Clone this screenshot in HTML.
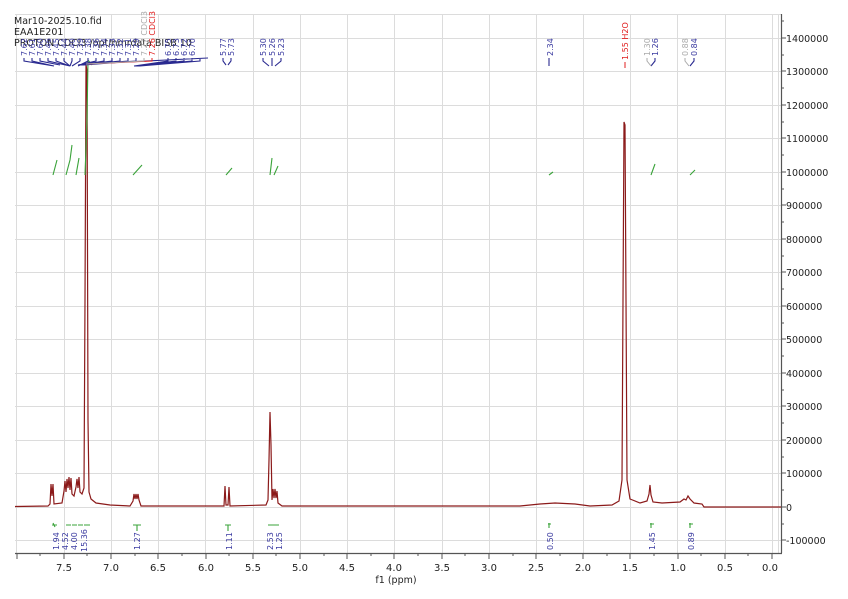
<!DOCTYPE html>
<html><head><meta charset="utf-8"><style>
body{margin:0;background:#fff;width:848px;height:599px;overflow:hidden}
svg{display:block;font-family:"DejaVu Sans","Liberation Sans",sans-serif}
</style></head><body>
<svg width="848" height="599" viewBox="0 0 848 599" xmlns="http://www.w3.org/2000/svg">
<g stroke="#dcdcdc" stroke-width="1">
<line x1="15" y1="14.5" x2="781" y2="14.5"/>
<line x1="15" y1="38.5" x2="781" y2="38.5"/><line x1="15" y1="71.5" x2="781" y2="71.5"/><line x1="15" y1="105.5" x2="781" y2="105.5"/><line x1="15" y1="138.5" x2="781" y2="138.5"/><line x1="15" y1="172.5" x2="781" y2="172.5"/><line x1="15" y1="205.5" x2="781" y2="205.5"/><line x1="15" y1="239.5" x2="781" y2="239.5"/><line x1="15" y1="272.5" x2="781" y2="272.5"/><line x1="15" y1="306.5" x2="781" y2="306.5"/><line x1="15" y1="339.5" x2="781" y2="339.5"/><line x1="15" y1="373.5" x2="781" y2="373.5"/><line x1="15" y1="406.5" x2="781" y2="406.5"/><line x1="15" y1="440.5" x2="781" y2="440.5"/><line x1="15" y1="473.5" x2="781" y2="473.5"/><line x1="15" y1="507.5" x2="781" y2="507.5"/><line x1="15" y1="540.5" x2="781" y2="540.5"/>
<line x1="16.5" y1="14" x2="16.5" y2="553"/><line x1="64.5" y1="14" x2="64.5" y2="553"/><line x1="111.5" y1="14" x2="111.5" y2="553"/><line x1="158.5" y1="14" x2="158.5" y2="553"/><line x1="205.5" y1="14" x2="205.5" y2="553"/><line x1="253.5" y1="14" x2="253.5" y2="553"/><line x1="300.5" y1="14" x2="300.5" y2="553"/><line x1="347.5" y1="14" x2="347.5" y2="553"/><line x1="394.5" y1="14" x2="394.5" y2="553"/><line x1="442.5" y1="14" x2="442.5" y2="553"/><line x1="489.5" y1="14" x2="489.5" y2="553"/><line x1="536.5" y1="14" x2="536.5" y2="553"/><line x1="583.5" y1="14" x2="583.5" y2="553"/><line x1="630.5" y1="14" x2="630.5" y2="553"/><line x1="677.5" y1="14" x2="677.5" y2="553"/><line x1="725.5" y1="14" x2="725.5" y2="553"/><line x1="772.5" y1="14" x2="772.5" y2="553"/><line x1="778.5" y1="14" x2="778.5" y2="553"/>
</g>
<g stroke="#555" stroke-width="1.2" fill="none">
<line x1="15" y1="553.5" x2="782" y2="553.5"/>
<line x1="781.5" y1="14" x2="781.5" y2="553"/>
</g>
<g stroke="#555" stroke-width="1">
<path d="M17 553v6M64 553v6M111 553v6M158 553v6M206 553v6M253 553v6M300 553v6M347 553v6M394 553v6M442 553v6M489 553v6M536 553v6M583 553v6M630 553v6M678 553v6M725 553v6M772 553v6"/>
<path d="M40 553v3M87 553v3M135 553v3M182 553v3M229 553v3M276 553v3M324 553v3M371 553v3M418 553v3M465 553v3M513 553v3M560 553v3M607 553v3M654 553v3M701 553v3M748 553v3"/>
<path d="M781 38h5M781 71h5M781 105h5M781 138h5M781 172h5M781 205h5M781 239h5M781 272h5M781 306h5M781 339h5M781 373h5M781 406h5M781 440h5M781 473h5M781 507h5M781 540h5"/>
<path d="M781 21h3M781 55h3M781 88h3M781 122h3M781 155h3M781 189h3M781 222h3M781 256h3M781 289h3M781 323h3M781 356h3M781 390h3M781 423h3M781 457h3M781 490h3M781 524h3"/>
</g>
<g font-size="9.5" fill="#222">
<text x="786" y="42">1400000</text><text x="786" y="75">1300000</text><text x="786" y="109">1200000</text><text x="786" y="142">1100000</text><text x="786" y="176">1000000</text><text x="786" y="209">900000</text><text x="786" y="243">800000</text><text x="786" y="276">700000</text><text x="786" y="310">600000</text><text x="786" y="343">500000</text><text x="786" y="377">400000</text><text x="786" y="410">300000</text><text x="786" y="444">200000</text><text x="786" y="477">100000</text><text x="786" y="511">0</text><text x="786" y="544">-100000</text>
</g>
<g font-size="10" fill="#222" text-anchor="middle">
<text x="64" y="571">7.5</text><text x="111" y="571">7.0</text><text x="158" y="571">6.5</text><text x="206" y="571">6.0</text><text x="253" y="571">5.5</text><text x="300" y="571">5.0</text><text x="347" y="571">4.5</text><text x="394" y="571">4.0</text><text x="442" y="571">3.5</text><text x="489" y="571">3.0</text><text x="536" y="571">2.5</text><text x="583" y="571">2.0</text><text x="630" y="571">1.5</text><text x="678" y="571">1.0</text><text x="725" y="571">0.5</text><text x="770" y="571">0.0</text>
<text x="396" y="583" font-size="9.5">f1 (ppm)</text>
</g>
<g font-size="9.5" fill="#222">
<text x="14" y="24">Mar10-2025.10.fid</text>
<text x="14" y="35">EAA1E201</text>
<text x="14" y="46">PROTON CDCl3 /opt/nmrdata BISB 10</text>
</g>
<path fill="none" stroke="#8b1a1a" stroke-width="1.2" d="M15 506.5 L48 506 L50 504 L51 484 L52 496 L53 484 L54 504 L62 503 L64 491 L65 481 L66 492 L67 479 L68 488 L69 477 L70 490 L71 478 L72 494 L74 496 L76 487 L77 479 L78 488 L79 477 L80 492 L82 494 L84 488 L85 300 L86 65 L87 70 L88 420 L89 492 L91 499 L96 503 L110 505 L130 506 L133 501 L134 494 L135 499 L136 494 L137 499 L138 494 L139 500 L141 506 L224 506 L225 486 L226 505 L228 505 L229 487 L230 506 L266 505 L268 500 L269 460 L270 412 L271 445 L272 500 L273 489 L274 498 L275 489 L276 498 L277 491 L278 503 L282 506 L520 506 L540 504 L555 503 L575 504 L590 506 L612 505 L619 501 L622 480 L623 300 L624 122 L625 125 L626 300 L627 480 L630 499 L640 503 L647 501 L649 494 L650 485 L651 495 L653 502 L662 503 L680 502 L684 499 L686 500 L688 496 L690 499 L694 503 L702 504 L704 507 L781 507"/>
<g fill="none" stroke="#3aa33a" stroke-width="1.1">
<path d="M53 175 L57 160M66 175 L70 160 L72 145M76 175 L79 158M85 175 L87 120 L88 60 L92 65"/>
<path d="M133 175 L142 165M226 175 L232 168M270 175 L272 158M274 175 L278 166M549 175 L553 172M651 175 L655 164M690 175 L695 170"/>
<path d="M52 525h5M53 523l2 4M66 525h5M72 525h5M78 525h5M84 525h6M133 525h8M137 525v6M225 525h6M228 525v6M268 525h8M273 525h6M548 524h3M549 523v5M650 524h4M651 523v5M689 524h4M690 523v5"/>
</g>
<g font-size="8" fill="#3a3aa0">
<text transform="translate(59,550) rotate(-90)">1.94</text>
<text transform="translate(68,550) rotate(-90)">4.52</text>
<text transform="translate(77,550) rotate(-90)">4.00</text>
<text transform="translate(87,552) rotate(-90)">15.36</text>
<text transform="translate(140,550) rotate(-90)">1.27</text>
<text transform="translate(232,550) rotate(-90)">1.11</text>
<text transform="translate(273,550) rotate(-90)">2.53</text>
<text transform="translate(282,550) rotate(-90)">1.25</text>
<text transform="translate(553,550) rotate(-90)">0.50</text>
<text transform="translate(655,550) rotate(-90)">1.45</text>
<text transform="translate(694,550) rotate(-90)">0.89</text>
</g>
<g font-size="8" fill="#3a3aa0">
<text transform="translate(27,56) rotate(-90)">7.62</text><text transform="translate(35,56) rotate(-90)">7.61</text><text transform="translate(43,56) rotate(-90)">7.60</text><text transform="translate(51,56) rotate(-90)">7.46</text><text transform="translate(59,56) rotate(-90)">7.45</text><text transform="translate(67,56) rotate(-90)">7.44</text><text transform="translate(75,56) rotate(-90)">7.40</text><text transform="translate(83,56) rotate(-90)">7.39</text><text transform="translate(91,56) rotate(-90)">7.38</text><text transform="translate(99,56) rotate(-90)">7.36</text><text transform="translate(107,56) rotate(-90)">7.34</text><text transform="translate(115,56) rotate(-90)">7.33</text><text transform="translate(123,56) rotate(-90)">7.32</text><text transform="translate(131,56) rotate(-90)">7.31</text><text transform="translate(139,56) rotate(-90)">7.29</text>
<text transform="translate(147,56) rotate(-90)" fill="#aaa">7.27 CDCl3</text>
<text transform="translate(155,56) rotate(-90)" fill="#e02020">7.26 CDCl3</text>
<text transform="translate(171,56) rotate(-90)">6.75</text><text transform="translate(179,56) rotate(-90)">6.73</text><text transform="translate(187,56) rotate(-90)">6.72</text><text transform="translate(195,56) rotate(-90)">6.70</text>
<text transform="translate(226,56) rotate(-90)">5.77</text><text transform="translate(234,56) rotate(-90)">5.73</text>
<text transform="translate(266,56) rotate(-90)">5.30</text><text transform="translate(275,56) rotate(-90)">5.26</text><text transform="translate(284,56) rotate(-90)">5.23</text>
<text transform="translate(553,56) rotate(-90)">2.34</text>
<text transform="translate(628,60) rotate(-90)" fill="#e02020">1.55 H2O</text>
<text transform="translate(650,56) rotate(-90)" fill="#aaa">1.30</text><text transform="translate(658,56) rotate(-90)">1.26</text>
<text transform="translate(688,56) rotate(-90)" fill="#aaa">0.88</text><text transform="translate(697,56) rotate(-90)">0.84</text>
</g>
<g fill="none" stroke="#2a2a90" stroke-width="1.1">
<path d="M24 58v3l30 5M32 58v3l22 5M40 58v3l20 4M48 58v3l22 5M56 58v3l14 5M64 58v3l6 5M72 58v3l-2 5M80 58v3l-8 5M88 58v3l-10 5M96 58v3l-18 4M104 58v3l-24 4M112 58v3l-32 4M120 58v3l-38 4M128 58v3l-44 4M136 58v3l-52 4"/>
<path d="M168 58v3l-34 5M176 58v3l-40 5M184 58v3l-46 5M192 58v3l-52 5M200 58v3l-60 5M84 64L208 58"/>
<path d="M223 58v3l3 4M231 58v3l-3 4M263 58v3l6 5M272 58v3l0 5M281 58v3l-6 5M549 58v8M655 58v3l-4 5M694 58v3l-4 5"/>
</g>
<path stroke="#e02020" stroke-width="1" fill="none" d="M152 58v3l-66 3M625 62v6"/>
<path stroke="#aaa" stroke-width="1" fill="none" d="M144 58v3l-58 3M647 58v3l4 5M685 58v3l4 5"/>
</svg>
</body></html>
